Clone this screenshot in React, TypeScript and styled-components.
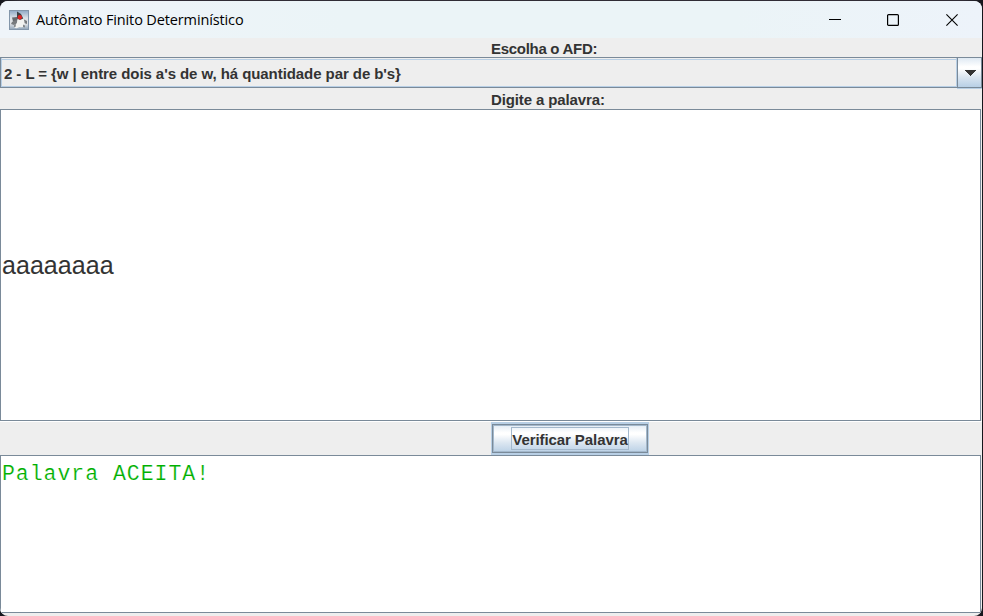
import React from "react";
import styled, { createGlobalStyle } from "styled-components";

const steel = "#7a8a99";
const pale = "#b8cfe5";
const metal = "linear-gradient(#dfe9f3 0%, #ffffff 30%, #ffffff 36%, #dbe6f1 65%, #b8cfe5 100%)";

const GlobalStyle = createGlobalStyle`
  * { box-sizing: border-box; }
  body { margin: 0; background: #15161c; overflow: hidden; }
`;

const Desktop = styled.div`
  width: 983px;
  height: 616px;
  padding: 1px 1px 0 0;
  background: linear-gradient(90deg, #15161c, #302c35 2%, #302c35 98%, #15161c);
`;

const Window = styled.main`
  display: flex;
  flex-direction: column;
  width: 982px;
  height: 615px;
  overflow: hidden;
  border-radius: 8px;
  background: #eeeeee;
  color: #333333;
  font-family: "Liberation Sans", Arial, sans-serif;
`;

const TitleBar = styled.header`
  display: flex;
  align-items: center;
  flex: 0 0 37px;
  padding: 0 1px 0 9px;
  background: linear-gradient(90deg, #eff4f9, #ebf4f7 35%, #ebf4f7 75%, #edf3fa);
  color: #000;
`;

const Title = styled.h1`
  flex: 1;
  margin: 0 0 0 7px;
  font: 400 14.5px/20px "Open Sans", "Noto Sans", sans-serif;
  letter-spacing: -0.13px;
  white-space: nowrap;
`;

const WindowButton = styled.button`
  display: flex;
  align-items: center;
  justify-content: center;
  width: 58.5px;
  height: 37px;
  padding: 0;
  border: 0;
  background: none;
  color: #000;
`;

const Label = styled.label<{ $height: number; $drop: number; $tracking: number }>`
  flex: 0 0 ${(p) => p.$height}px;
  padding: ${(p) => p.$drop}px 0 0 491px;
  font-size: 15px;
  font-weight: 700;
  line-height: 17px;
  letter-spacing: ${(p) => p.$tracking}px;
`;

const Combo = styled.div`
  display: flex;
  flex: 0 0 31px;
`;

const ComboValue = styled.div`
  flex: 1;
  padding: 2px 0 0 3px;
  border: 1px solid ${steel};
  border-right: 0;
  font-size: 15px;
  font-weight: 700;
  line-height: 27px;
  letter-spacing: -0.07px;
  white-space: pre;
  background:
    linear-gradient(${pale}, ${pale}) 0 1px / 100% 1px no-repeat,
    linear-gradient(${pale}, ${pale}) 0 100% / 100% 1px no-repeat,
    linear-gradient(${pale}, ${pale}) 0 0 / 1px 100% no-repeat,
    linear-gradient(${pale}, ${pale}) 100% 0 / 1px 100% no-repeat;
`;

const ComboArrow = styled.button`
  display: flex;
  align-items: center;
  justify-content: center;
  width: 25px;
  padding: 0;
  border: 1px solid ${steel};
  background: ${metal};
  box-shadow: 0 1px 0 ${pale};
`;

const WordField = styled.div`
  display: flex;
  align-items: center;
  flex: 0 0 312px;
  width: 981px;
  padding-left: 1px;
  border: 1px solid ${steel};
  background: #fff;
  font-size: 25px;
  letter-spacing: 0.05px;
`;

const ButtonRow = styled.div`
  flex: 0 0 34px;
  padding: 0 0 0 491px;
  border-top: 1px solid #fff;
`;

const VerifyButton = styled.button`
  display: flex;
  align-items: center;
  justify-content: center;
  width: 158px;
  height: 33px;
  padding: 0;
  border: 1px solid ${pale};
  border-top-width: 2px;
  border-bottom-width: 2px;
  outline: 0;
  background: ${metal};
  box-shadow: inset 0 0 0 1px ${steel}, inset 0 0 0 2px #a3b8cc;
  color: #333;
  font: 700 15px/22px "Liberation Sans", Arial, sans-serif;
`;

const FocusFrame = styled.span`
  width: 118px;
  height: 23px;
  border: 1px solid #a3b8cc;
  white-space: nowrap;
  line-height: 23px;
  letter-spacing: -0.08px;
`;

const ResultArea = styled.output`
  display: block;
  flex: 0 0 158px;
  width: 981px;
  padding: 5px 0 0 1px;
  border: 1px solid ${steel};
  background: #fff;
  color: #00b000;
  font: 21.5px/26px "Liberation Mono", "Courier New", monospace;
  letter-spacing: 0.97px;
  -webkit-text-stroke: 0.2px #fff;
  white-space: pre;
`;

function JavaIcon() {
  return (
    <svg width="20" height="20" viewBox="0 0 20 20" aria-hidden="true">
      <defs>
        <linearGradient id="sky" x2="0" y2="1">
          <stop stopColor="#8fa9c6" />
          <stop offset="0.4" stopColor="#dce2e7" />
          <stop offset="0.7" stopColor="#dfe2e5" />
          <stop offset="1" stopColor="#8fa4b8" />
        </linearGradient>
      </defs>
      <rect x="0.5" y="0.5" width="19" height="19" fill="url(#sky)" stroke="#8396aa" />
      <path d="M8 9 3 12l-1 2 3 1 4-2zm6 0 4 2v3l-3-1z" fill="#777b7e" />
      <path d="M8 1.5 12 4l2.5 5L8 10.5z" fill="#3c4044" />
      <path d="M3 7.5 8 7v3l-4 1.5z" fill="#65696e" />
      <path d="M8.5 8.5q3 3 6-.5l1 4v4q-2 2-5 1-3 2-5 .5l2.500-5z" fill="#f2f3f1" />
      <path d="m5 15 2-1-.5 3H5zm9-.5 2 1v2l-2-.5z" fill="#85898b" />
      <circle cx="10.8" cy="7.3" r="2.2" fill="#dc2525" />
    </svg>
  );
}

export default function App() {
  return (
    <>
      <GlobalStyle />
      <Desktop>
        <Window>
          <TitleBar>
            <JavaIcon />
            <Title>Autômato Finito Determinístico</Title>
            <WindowButton aria-label="Minimizar">
              <svg width="12" height="12" shapeRendering="crispEdges"><path d="M0 5.5h12" stroke="currentColor" /></svg>
            </WindowButton>
            <WindowButton aria-label="Maximizar">
              <svg width="12" height="12"><rect x="0.6" y="0.6" width="10.8" height="10.8" rx="1" fill="none" stroke="currentColor" strokeWidth="1.2" /></svg>
            </WindowButton>
            <WindowButton aria-label="Fechar">
              <svg width="12" height="12"><path d="m.4.4 11.2 11.2m0-11.2L.4 11.6" stroke="currentColor" strokeWidth="1.1" /></svg>
            </WindowButton>
          </TitleBar>
          <Label $height={19} $drop={2} $tracking={-0.29}>Escolha o AFD:</Label>
          <Combo>
            <ComboValue>{"2 - L = {w | entre dois a's de w, há quantidade par de b's}"}</ComboValue>
            <ComboArrow aria-label="Abrir lista">
              <svg width="12" height="6" shapeRendering="crispEdges"><path d="M0 0h12L6 6z" fill="#333" /></svg>
            </ComboArrow>
          </Combo>
          <Label $height={21} $drop={3} $tracking={-0.12}>Digite a palavra:</Label>
          <WordField>aaaaaaaa</WordField>
          <ButtonRow>
            <VerifyButton><FocusFrame>Verificar Palavra</FocusFrame></VerifyButton>
          </ButtonRow>
          <ResultArea>Palavra ACEITA!</ResultArea>
        </Window>
      </Desktop>
    </>
  );
}
